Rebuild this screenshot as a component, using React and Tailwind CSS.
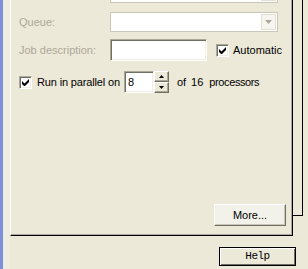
import React from "react";

const sunken =
  "border border-t-[#aca899] border-l-[#aca899] border-r-white border-b-white shadow-[inset_1px_1px_0_#716f64,inset_-1px_-1px_0_#f1efe2]";

function ComboBox({ className = "" }) {
  return (
    <div className={`flex h-[20px] w-[168px] border border-[#c9c7ba] bg-white ${className}`}>
      <div className="flex-1" />
      <div className="m-px flex w-[15px] items-center justify-center border border-[#e2dfd3] bg-[#f6f5f0]">
        <svg width="7" height="4" viewBox="0 0 7 4">
          <path d="M0 0h7L3.5 4z" fill="#aca899" />
        </svg>
      </div>
    </div>
  );
}

function CheckBox() {
  return (
    <div className={`flex h-[13px] w-[13px] shrink-0 items-center justify-center bg-white ${sunken}`}>
      <svg width="7" height="7" viewBox="0 0 7 7">
        <path d="M0 2v3l2 2h1l4-4V0L2.5 4.5z" fill="#000" />
      </svg>
    </div>
  );
}

function SpinHalf({ up }) {
  return (
    <div className="flex h-[11px] w-[15px] items-center justify-center border border-t-white border-l-white border-r-[#716f64] border-b-[#716f64] bg-[#ece9d8] shadow-[inset_-1px_-1px_0_#aca899]">
      <svg width="5" height="3" viewBox="0 0 5 3">
        <path d={up ? "M0 3h5L2.5 0z" : "M0 0h5L2.5 3z"} fill="#000" />
      </svg>
    </div>
  );
}

export default function App() {
  return (
    <div
      className="flex h-[269px] w-[308px] overflow-hidden bg-[#ece9d8] text-[11px] text-black"
      style={{ fontFamily: '"Liberation Sans", Arial, sans-serif' }}
    >
      <div className="w-[3px] shrink-0 bg-[#7b90d8]" />
      <div className="w-[7px] shrink-0 bg-[#efece0]" />
      <div className="flex flex-1 flex-col">
        <div className="flex items-start">
          <div className="flex h-[236px] w-[283px] flex-col overflow-hidden border-l border-r border-b border-l-white border-r-black border-b-black shadow-[inset_-1px_-1px_0_#aca899]">
            <div className="ml-[99px] mt-[-17px]">
              <ComboBox />
            </div>

            <div className="mt-[9px] flex items-center">
              <span className="w-[99px] pl-[8px] text-[#aca899]">Queue:</span>
              <ComboBox />
            </div>

            <div className="mt-[7px] flex items-center">
              <span className="w-[99px] pl-[8px] text-[#aca899]">Job description:</span>
              <div className={`h-[22px] w-[97px] bg-white ${sunken}`} />
              <div className="ml-[9px] flex items-center gap-[4px]">
                <CheckBox />
                <span>Automatic</span>
              </div>
            </div>

            <div className="mt-[10px] flex items-center pl-[8px]">
              <CheckBox />
              <span className="ml-[5px] tracking-[-0.15px]">Run in parallel on</span>
              <div className={`ml-[4px] flex h-[22px] w-[30px] items-center bg-white pl-[3px] ${sunken}`}>
                8
              </div>
              <div className="flex flex-col">
                <SpinHalf up />
                <SpinHalf />
              </div>
              <span className="ml-[8px]">of</span>
              <span className="ml-[5px]">16</span>
              <span className="ml-[6px] tracking-[-0.4px]">processors</span>
            </div>

            <div className="mt-auto mb-[9px] ml-[203px]">
              <button className="flex h-[22px] w-[72px] items-center justify-center border border-t-white border-l-white border-r-[#716f64] border-b-[#716f64] bg-[#f2f1ea] shadow-[inset_-1px_-1px_0_#c9c7ba]">
                More...
              </button>
            </div>
          </div>
          <div className="h-[216px] w-[10px] border-r border-b border-black" />
        </div>

        <div className="mt-[11px] ml-[209px]">
          <button
            className="flex h-[19px] w-[77px] items-center justify-center border border-black bg-[#ece9d8] shadow-[inset_1px_1px_0_#fff,inset_-1px_-1px_0_#716f64]"
            style={{ fontFamily: '"Liberation Mono", "Courier New", monospace' }}
          >
            <span className="text-[11px] tracking-[-0.5px]">Help</span>
          </button>
        </div>
      </div>
    </div>
  );
}
